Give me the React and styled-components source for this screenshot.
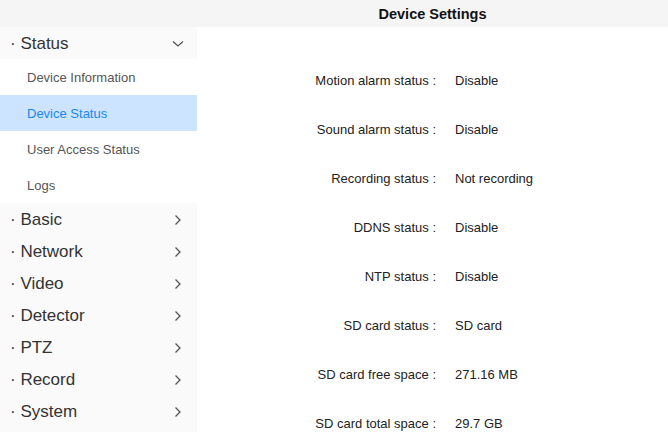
import React from "react";
import styled, { createGlobalStyle } from "styled-components";

const Global = createGlobalStyle`
  html, body { margin: 0; padding: 0; background: #fff; }
  body { font-family: "Liberation Sans", Arial, sans-serif; }
  * { box-sizing: border-box; }
`;

const Page = styled.div`
  width: 668px;
  height: 432px;
  overflow: hidden;
  display: flex;
  flex-direction: column;
`;

const Header = styled.header`
  height: 27px;
  background: #f5f5f5;
  display: grid;
  grid-template-columns: 197px 1fr;
  align-items: center;
`;

const Title = styled.h1`
  grid-column: 2;
  margin: 0;
  text-align: center;
  font-size: 14.5px;
  font-weight: bold;
  color: #111;
`;

const Body = styled.div`
  flex: 1;
  display: flex;
  min-height: 0;
`;

const Sidebar = styled.nav`
  width: 197px;
  background: #fafafa;
  display: flex;
  flex-direction: column;
`;

const GroupRow = styled.div`
  height: 32px;
  display: flex;
  align-items: center;
  justify-content: space-between;
  padding: 2px 12px 0 10px;
  font-size: 17px;
  color: #333;
`;

const Sub = styled.div`
  height: 36px;
  display: flex;
  align-items: center;
  padding-left: 27px;
  font-size: 13px;
  background: ${(p) => (p.$active ? "#cce4ff" : "#fff")};
  color: ${(p) => (p.$active ? "#1a86f2" : "#555")};
`;

const Chevron = ({ down }) =>
  down ? (
    <svg width="12" height="8" viewBox="0 0 12 8">
      <path d="M1 1.5 L6 6 L11 1.5" fill="none" stroke="#555" strokeWidth="1.3" />
    </svg>
  ) : (
    <svg width="8" height="12" viewBox="0 0 8 12">
      <path d="M1.5 1.5 L6 6 L1.5 10.5" fill="none" stroke="#555" strokeWidth="1.3" />
    </svg>
  );

const ChevronBox = styled.span`
  width: 14px;
  display: flex;
  justify-content: center;
`;

const Main = styled.main`
  flex: 1;
  padding-top: 29px;
`;

const Row = styled.div`
  height: 49px;
  display: grid;
  grid-template-columns: 239px 1fr;
  column-gap: 19px;
  align-items: center;
  font-size: 13px;
  color: #222;
`;

const Label = styled.span`
  text-align: right;
`;

const Value = styled.span``;

const groups = ["Basic", "Network", "Video", "Detector", "PTZ", "Record", "System"];
const subs = ["Device Information", "Device Status", "User Access Status", "Logs"];
const rows = [
  ["Motion alarm status :", "Disable"],
  ["Sound alarm status :", "Disable"],
  ["Recording status :", "Not recording"],
  ["DDNS status :", "Disable"],
  ["NTP status :", "Disable"],
  ["SD card status :", "SD card"],
  ["SD card free space :", "271.16 MB"],
  ["SD card total space :", "29.7 GB"],
];

export default function App() {
  return (
    <Page>
      <Global />
      <Header>
        <Title>Device Settings</Title>
      </Header>
      <Body>
        <Sidebar>
          <GroupRow>
            <span>· Status</span>
            <ChevronBox><Chevron down /></ChevronBox>
          </GroupRow>
          {subs.map((s) => (
            <Sub key={s} $active={s === "Device Status"}>{s}</Sub>
          ))}
          {groups.map((g) => (
            <GroupRow key={g}>
              <span>· {g}</span>
              <ChevronBox><Chevron /></ChevronBox>
            </GroupRow>
          ))}
        </Sidebar>
        <Main>
          {rows.map(([l, v]) => (
            <Row key={l}>
              <Label>{l}</Label>
              <Value>{v}</Value>
            </Row>
          ))}
        </Main>
      </Body>
    </Page>
  );
}
